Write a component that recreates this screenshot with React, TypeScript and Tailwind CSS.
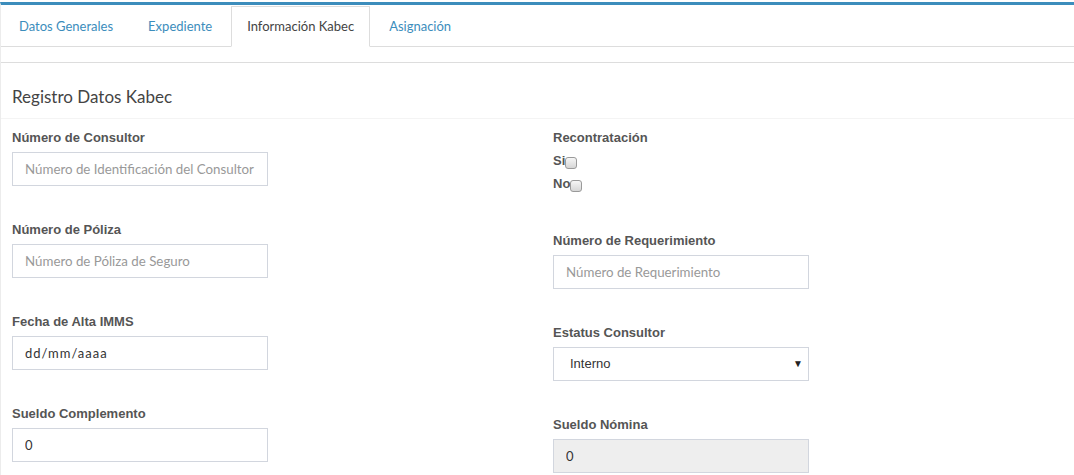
import React from "react";

const tabs = ["Datos Generales", "Expediente", "Información Kabec", "Asignación"];

function Label({ children }: { children: React.ReactNode }) {
  return (
    <label className="block h-[18px] leading-[18px] text-[13px] font-bold text-[#555] [font-family:'Liberation_Sans',Arial,sans-serif]">
      {children}
    </label>
  );
}

function TextField({
  label,
  placeholder,
  value,
  disabled,
  extra = "",
}: {
  label: string;
  placeholder?: string;
  value?: string;
  disabled?: boolean;
  extra?: string;
}) {
  return (
    <div className="flex flex-col gap-[5px] w-[256px]">
      <Label>{label}</Label>
      <input
        type="text"
        readOnly
        placeholder={placeholder}
        defaultValue={value}
        className={
          "h-[34px] w-[256px] border border-[#d2d6de] pl-[12px] pr-[4px] pb-[1px] text-[13px] text-[#333] placeholder:text-[13.3px] placeholder:text-[#999] outline-none [font-family:Lato,'Open_Sans',sans-serif] " +
          (disabled ? "bg-[#eeeeee] " : "bg-white ") +
          extra
        }
      />
    </div>
  );
}

function Check({ label }: { label: string }) {
  return (
    <div className="flex items-center h-[23px]">
      <span className="text-[13px] font-bold text-[#555] [font-family:'Liberation_Sans',Arial,sans-serif] leading-[18px]">
        {label}
      </span>
      <input
        type="checkbox"
        className="appearance-none w-[12px] h-[12px] mt-[4px] rounded-[3px] border border-[#9a9a9a] bg-gradient-to-b from-[#f6f6f6] to-[#d6d6d6]"
      />
    </div>
  );
}

export default function App() {
  return (
    <div className="w-[1074px] h-[475px] overflow-hidden bg-white pt-[2px] [font-family:Lato,'Open_Sans',sans-serif]">
      <div className="h-full border-t-[3px] border-t-[#3c8dbc] border-l border-l-[#ececec]">
        <ul className="flex h-[42px] border-b border-[#dddddd] pl-[2px] items-end">
          {tabs.map((t) => {
            const active = t === "Información Kabec";
            return (
              <li
                key={t}
                className={
                  "h-[40px] mr-[3px] px-[15px] pt-[1px] flex items-center text-[13px] " +
                  (active
                    ? "border border-[#dddddd] border-b-white bg-white -mb-px h-[41px] text-[#444]"
                    : "text-[#3c8dbc] border border-transparent")
                }
              >
                {t}
              </li>
            );
          })}
        </ul>
        <div className="h-[16px] border-b border-[#dddddd]" />
        <div className="h-[56px] border-b border-[#f4f4f4] flex items-end pb-[11px] pl-[11px]">
          <h3 className="text-[17px] leading-[20px] text-[#444]">Registro Datos Kabec</h3>
        </div>
        <div className="flex pl-[11px] pt-[10px]">
          <div className="w-[541px] flex flex-col gap-[35px]">
            <TextField label="Número de Consultor" placeholder="Número de Identificación del Consultor" />
            <TextField label="Número de Póliza" placeholder="Número de Póliza de Seguro" />
            <TextField label="Fecha de Alta IMMS" value="dd/mm/aaaa" extra="tracking-[1px]" />
            <TextField label="Sueldo Complemento" value="0" />
          </div>
          <div className="flex flex-col">
            <div className="flex flex-col">
              <Label>Recontratación</Label>
              <div className="mt-[2px]">
                <Check label="Si" />
                <Check label="No" />
              </div>
            </div>
            <div className="mt-[37px] flex flex-col gap-[35px]">
              <TextField label="Número de Requerimiento" placeholder="Número de Requerimiento" />
              <div className="flex flex-col gap-[5px] w-[256px]">
                <Label>Estatus Consultor</Label>
                <div className="relative">
                  <select
                    defaultValue="Interno"
                    className="appearance-none h-[34px] w-[256px] border border-[#d2d6de] bg-white pl-[16px] text-[13px] text-[#333] outline-none [font-family:'Liberation_Sans',Arial,sans-serif]"
                  >
                    <option>Interno</option>
                    <option>Externo</option>
                  </select>
                  <span className="pointer-events-none absolute right-[6px] top-[9px] text-[10px] text-[#222]">▼</span>
                </div>
              </div>
              <TextField label="Sueldo Nómina" value="0" disabled />
            </div>
          </div>
        </div>
      </div>
    </div>
  );
}
